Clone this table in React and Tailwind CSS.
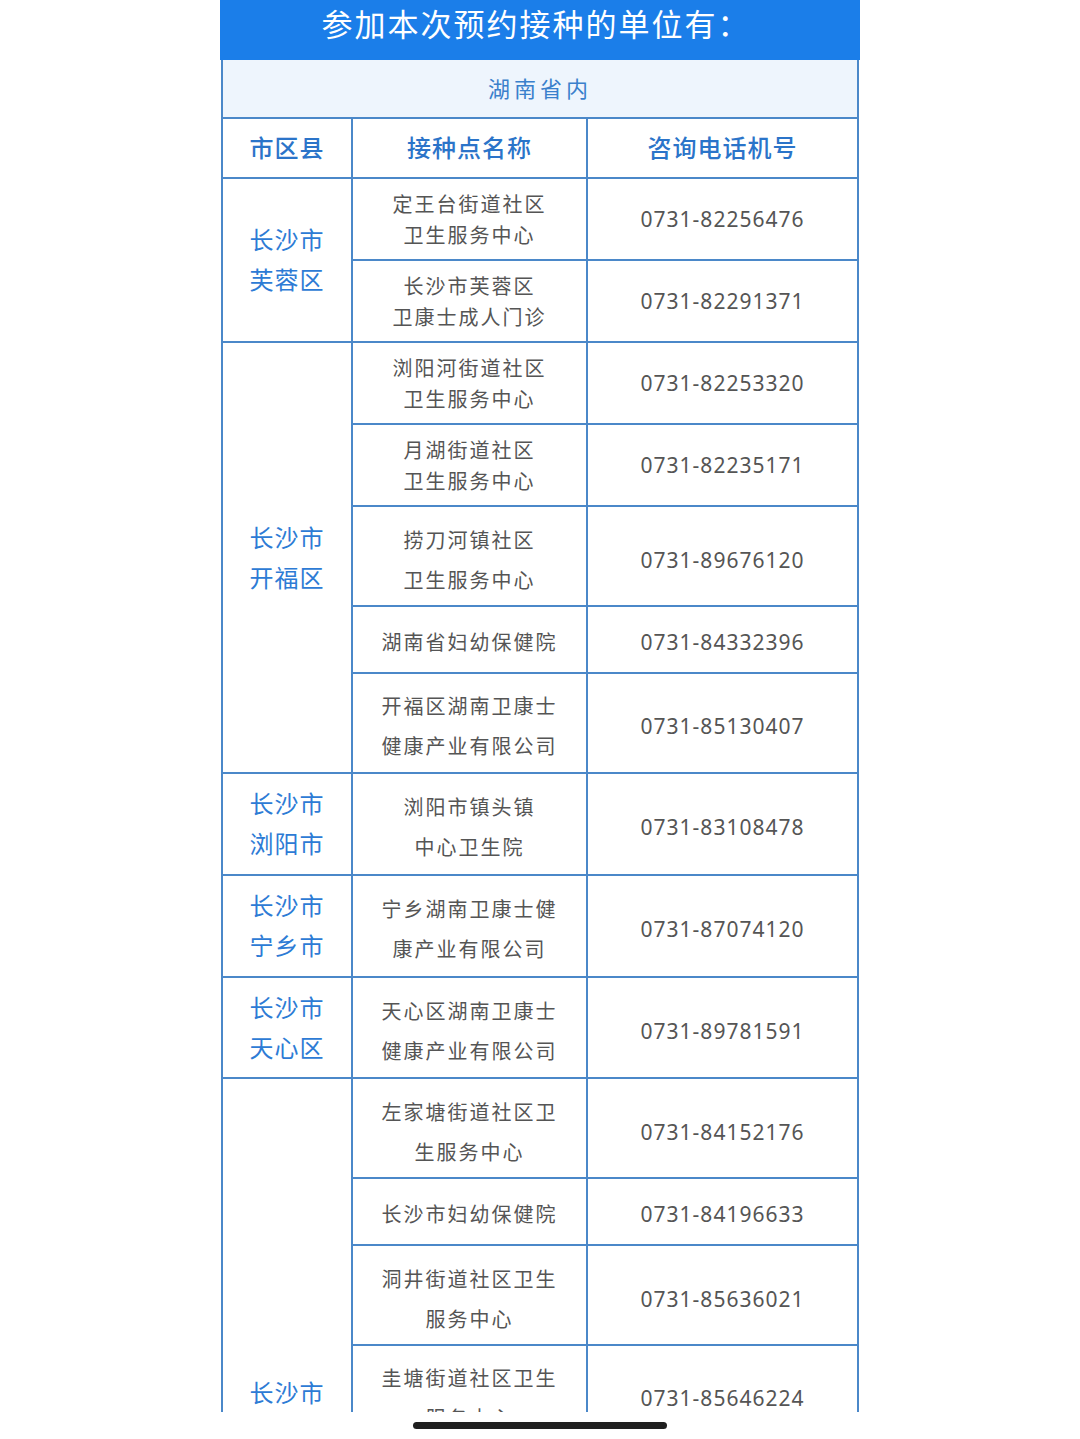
import React from "react";

const FONT = { fontFamily: '"Noto Sans", "Noto Sans CJK SC", sans-serif' };

const groups = [
  {
    district: ["长沙市", "芙蓉区"],
    rows: [
      { name: ["定王台街道社区", "卫生服务中心"], phone: "0731-82256476", h: 82, lh: 31, pt: 1 },
      { name: ["长沙市芙蓉区", "卫康士成人门诊"], phone: "0731-82291371", h: 82, lh: 31, pt: 1 },
    ],
  },
  {
    district: ["长沙市", "开福区"],
    rows: [
      { name: ["浏阳河街道社区", "卫生服务中心"], phone: "0731-82253320", h: 82, lh: 31, pt: 1 },
      { name: ["月湖街道社区", "卫生服务中心"], phone: "0731-82235171", h: 82, lh: 31, pt: 1 },
      { name: ["捞刀河镇社区", "卫生服务中心"], phone: "0731-89676120", h: 100, lh: 40, pt: 9 },
      { name: ["湖南省妇幼保健院"], phone: "0731-84332396", h: 67, lh: 40, pt: 6 },
      { name: ["开福区湖南卫康士", "健康产业有限公司"], phone: "0731-85130407", h: 100, lh: 40, pt: 8 },
    ],
  },
  {
    district: ["长沙市", "浏阳市"],
    rows: [{ name: ["浏阳市镇头镇", "中心卫生院"], phone: "0731-83108478", h: 102, lh: 40, pt: 8 }],
  },
  {
    district: ["长沙市", "宁乡市"],
    rows: [{ name: ["宁乡湖南卫康士健", "康产业有限公司"], phone: "0731-87074120", h: 102, lh: 40, pt: 8 }],
  },
  {
    district: ["长沙市", "天心区"],
    rows: [{ name: ["天心区湖南卫康士", "健康产业有限公司"], phone: "0731-89781591", h: 101, lh: 40, pt: 8 }],
  },
  {
    district: ["长沙市", "雨花区"],
    rows: [
      { name: ["左家塘街道社区卫", "生服务中心"], phone: "0731-84152176", h: 100, lh: 40, pt: 9 },
      { name: ["长沙市妇幼保健院"], phone: "0731-84196633", h: 67, lh: 40, pt: 7 },
      { name: ["洞井街道社区卫生", "服务中心"], phone: "0731-85636021", h: 100, lh: 40, pt: 9 },
      { name: ["圭塘街道社区卫生", "服务中心"], phone: "0731-85646224", h: 100, lh: 40, pt: 8 },
      { name: [], phone: "", h: 101, lh: 40, pt: 0 },
      { name: [], phone: "", h: 101, lh: 40, pt: 0 },
      { name: [], phone: "", h: 101, lh: 40, pt: 0 },
    ],
  },
];

const cellBorder = "border-2 border-[#4b88c9]";

export default function App() {
  return (
    <div className="w-[1080px] bg-white" style={FONT}>
      <div className="mx-auto w-[640px] h-[1412px] overflow-hidden">
        <div className="h-[60px] bg-[#1b7ee9] flex items-center justify-center pb-[12px]">
          <span className="text-white text-[31px] tracking-[2px] leading-none pr-[8px]">
            参加本次预约接种的单位有：
          </span>
        </div>
        <table className="ml-[1px] w-[636px] table-fixed border-collapse">
          <colgroup>
            <col className="w-[130px]" />
            <col className="w-[235px]" />
            <col className="w-[271px]" />
          </colgroup>
          <tbody>
            <tr className="h-[58px]">
              <td
                colSpan={3}
                className={`${cellBorder} border-t-0 bg-[#eef5fd] text-center text-[22px] tracking-[4px] text-[#3a80cc]`}
              >
                湖南省内
              </td>
            </tr>
            <tr className="h-[60px]">
              <td className={`${cellBorder} text-center text-[24px] tracking-[1px] font-medium text-[#2b74c9]`}>市区县</td>
              <td className={`${cellBorder} text-center text-[24px] tracking-[1px] font-medium text-[#2b74c9]`}>接种点名称</td>
              <td className={`${cellBorder} text-center text-[24px] tracking-[1px] font-medium text-[#2b74c9]`}>咨询电话机号</td>
            </tr>
            {groups.map((g, gi) =>
              g.rows.map((r, ri) => (
                <tr key={`${gi}-${ri}`} style={{ height: r.h }}>
                  {ri === 0 && (
                    <td
                      rowSpan={g.rows.length}
                      className={`${cellBorder} text-center text-[24px] leading-[40px] tracking-[1px] text-[#2d7bd5]`}
                    >
                      {g.district.map((d) => (
                        <div key={d}>{d}</div>
                      ))}
                    </td>
                  )}
                  <td
                    className={`${cellBorder} text-center text-[20px] tracking-[2px] text-[#555555]`}
                    style={{ lineHeight: `${r.lh}px`, paddingTop: r.pt }}
                  >
                    {r.name.map((n) => (
                      <div key={n}>{n}</div>
                    ))}
                  </td>
                  <td
                    className={`${cellBorder} text-center text-[21px] tracking-[1px] text-[#555555]`}
                    style={{ paddingTop: r.pt }}
                  >
                    {r.phone}
                  </td>
                </tr>
              ))
            )}
          </tbody>
        </table>
      </div>
      <div className="h-[27px] flex items-center justify-center">
        <div className="w-[254px] h-[7px] rounded-full bg-[#1f1f1f]" />
      </div>
    </div>
  );
}
